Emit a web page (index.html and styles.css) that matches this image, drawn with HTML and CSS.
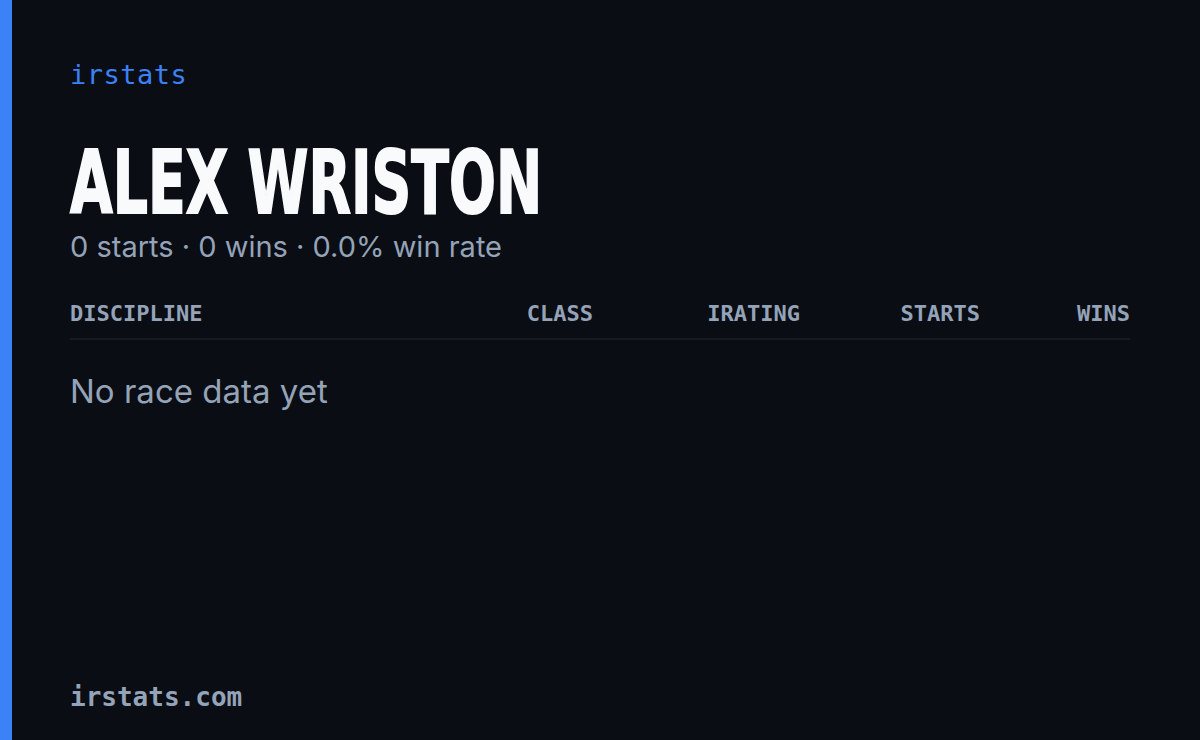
FILE: index.html
```html
<!DOCTYPE html>
<html lang="en">
<head>
    <meta charset="UTF-8">
    <title>irstats - Alex Wriston</title>
    <link rel="stylesheet" href="styles.css">
</head>
<body>
    <div class="card">
        <div class="accent"></div>
        <main class="content">
            <div class="brand">irstats</div>

            <h1 class="driver"><span>ALEX WRISTON</span></h1>
            <div class="summary">0 starts · 0 wins · 0.0% win rate</div>

            <div class="table-head">
                <span>DISCIPLINE</span>
                <span class="num">CLASS</span>
                <span class="num">IRATING</span>
                <span class="num">STARTS</span>
                <span class="num">WINS</span>
            </div>
            <div class="empty">No race data yet</div>

            <div class="footer">irstats.com</div>
        </main>
    </div>
</body>
</html>
```

FILE: styles.css
```css
html, body {
    margin: 0;
    padding: 0;
    background: #0a0d14;
}
.card {
    display: flex;
    width: 1200px;
    height: 740px;
    background: #0a0d14;
}
.accent {
    width: 12px;
    background: #3b82f6;
}
.content {
    flex: 1;
    display: flex;
    flex-direction: column;
    padding: 55px 70px 28px 58px;
    font-family: Inter, "Noto Sans", sans-serif;
    color: #94a3b8;
}
.brand {
    font-family: "DejaVu Sans Mono", monospace;
    font-size: 27px;
    letter-spacing: 0.5px;
    color: #3b82f6;
    line-height: 40px;
}
.driver {
    margin: 43px 0 0;
    font-family: "DejaVu Sans", sans-serif;
    font-weight: bold;
    font-size: 87px;
    line-height: 90px;
    letter-spacing: 0;
    color: #f8fafc;
}
/* no condensed face installed, so squeeze the bold one */
.driver span {
    display: inline-block;
    transform: scaleX(0.635);
    transform-origin: left center;
    -webkit-text-stroke: 2px #f8fafc;
}
.summary {
    font-size: 29px;
    line-height: 38px;
}
.table-head {
    display: grid;
    grid-template-columns: 1fr 160px 207px 180px 150px;
    margin-top: 35px;
    padding-bottom: 11px;
    border-bottom: 2px solid #151a24;
    font-family: "DejaVu Sans Mono", monospace;
    font-weight: bold;
    font-size: 22px;
    line-height: 26px;
}
.num {
    text-align: right;
}
.empty {
    margin-top: 31px;
    font-size: 33px;
    line-height: 40px;
}
.footer {
    margin-top: auto;
    font-family: "DejaVu Sans Mono", monospace;
    font-weight: bold;
    font-size: 26px;
    line-height: 30px;
}
```
